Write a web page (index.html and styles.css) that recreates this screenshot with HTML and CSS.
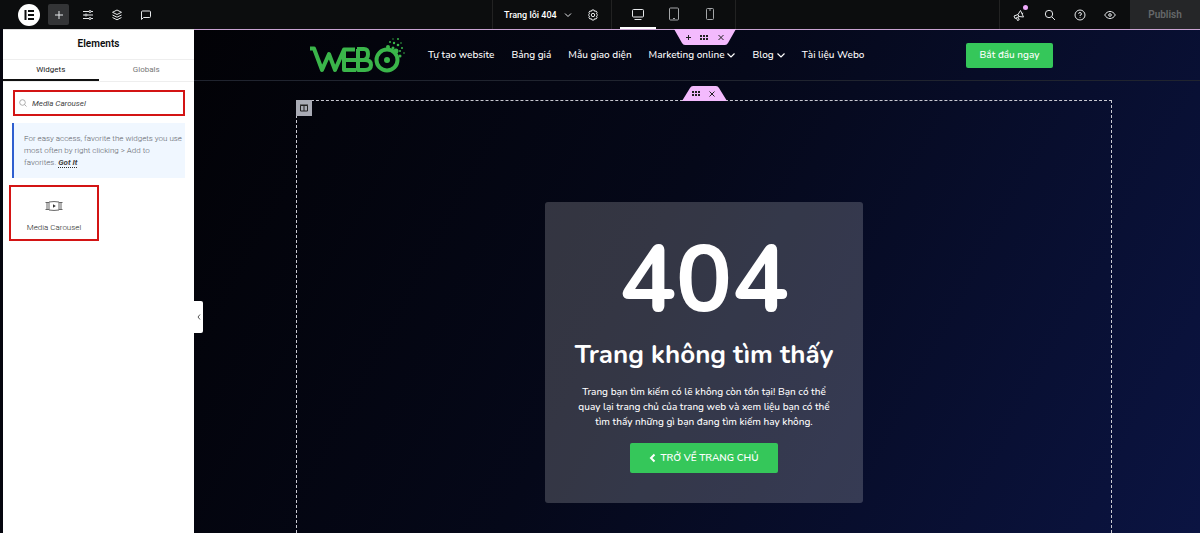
FILE: index.html
```html
<!DOCTYPE html>
<html lang="vi">
<head>
<meta charset="utf-8">
<meta name="viewport" content="width=device-width, initial-scale=1">
<title>Trang lỗi 404</title>
<link rel="stylesheet" href="styles.css">
</head>
<body>
<header class="topbar">
  <div class="tools">
    <button class="logo-btn" aria-label="Menu"><svg viewBox="0 0 22 22" width="22" height="22"><circle cx="11" cy="11" r="11" fill="#fff"/><path d="M6.500 6h2v10h-2zM10 6h6v2h-6zM10 10h6v2h-6zM10 14h6v2h-6z" fill="#0c0d0e"/></svg></button>
    <button class="tool tool-active" aria-label="Add"><svg class="ico" viewBox="0 0 12 12" width="12" height="12"><path d="M6 2v8M2 6h8"/></svg></button>
    <button class="tool" aria-label="Settings"><svg class="ico" viewBox="0 0 12 12" width="12" height="12"><path d="M1 2.500h6M9 2.500h2M1 6h2M5 6h6M1 9.500h6M9 9.500h2"/><circle cx="8" cy="2.500" r="1"/><circle cx="4" cy="6" r="1"/><circle cx="8" cy="9.500" r="1"/></svg></button>
    <button class="tool" aria-label="Structure"><svg class="ico" viewBox="0 0 12 12" width="12" height="12"><path d="M6 1L1.500 3.300 6 5.500l4.500-2.200zM1.500 6L6 8.200 10.500 6M1.500 8.500L6 10.800l4.500-2.300"/></svg></button>
    <button class="tool" aria-label="Notes"><svg class="ico" viewBox="0 0 12 12" width="12" height="12"><path d="M1.500 10.500V3a1 1 0 0 1 1-1h7a1 1 0 0 1 1 1v4.500a1 1 0 0 1-1 1h-6z"/></svg></button>
  </div>
  <div class="doc">
    <button class="doc-name">Trang lỗi 404 <svg class="ico" viewBox="0 0 8 8" width="8" height="8"><path d="M1 2.500l3 3 3-3"/></svg></button>
    <button class="doc-gear" aria-label="Page settings"><svg class="ico" viewBox="0 0 12 12" width="12" height="12"><path d="M4.900 1h2.200l.5 1.300 1.500-.3 1 1.700-.7 1.200 1.300 1.100-1.300 1.100.7 1.200-1 1.700-1.500-.3L7.100 11H4.900l-.5-1.300-1.500.3-1-1.700.7-1.200L1.300 6l1.300-1.100-.7-1.200 1-1.700 1.500.3z"/><circle cx="6" cy="6" r="1.700"/></svg></button>
  </div>
  <div class="devices">
    <button class="device device-active" aria-label="Desktop"><svg class="ico" viewBox="0 0 14 14" width="14" height="14"><rect x="1.500" y="2.500" width="11" height="7.500" rx="1"/><path d="M3.500 12.500h7"/></svg></button>
    <button class="device" aria-label="Tablet"><svg class="ico ico-dim" viewBox="0 0 14 14" width="14" height="14"><rect x="2.500" y="1" width="9" height="12" rx="1"/><path d="M6 11.500h2"/></svg></button>
    <button class="device" aria-label="Mobile"><svg class="ico ico-dim" viewBox="0 0 14 14" width="14" height="14"><rect x="3.500" y="1.500" width="7" height="11" rx="1"/><path d="M6 3h2"/></svg></button>
  </div>
  <div class="actions">
    <button class="action" aria-label="What's new"><svg class="ico" viewBox="0 0 14 14" width="14" height="14"><path d="M2 8l4-1.500L8.500 2.500l3 6.500-4.500-.5L3 10.500zM6 6.500l1 2M10 5.700l1.200-.7M4.500 10l1 2.500 1.700-.7-1-2.500"/></svg><span class="dot"></span></button>
    <button class="action" aria-label="Finder"><svg class="ico" viewBox="0 0 12 12" width="12" height="12"><circle cx="5" cy="5" r="3.700"/><path d="M7.800 7.800l3.200 3.200"/></svg></button>
    <button class="action" aria-label="Help"><svg class="ico" viewBox="0 0 12 12" width="12" height="12"><circle cx="6" cy="6" r="5"/><path d="M4.600 4.800a1.400 1.400 0 1 1 1.400 1.500v.7M6 8.300v.7"/></svg></button>
    <button class="action" aria-label="Preview"><svg class="ico" viewBox="0 0 12 12" width="12" height="12"><path d="M.7 6C3.300 1.300 8.700 1.300 11.300 6 8.700 10.700 3.300 10.700.7 6z"/><circle cx="6" cy="6" r="1.300"/></svg></button>
  </div>
  <button class="publish">Publish</button>
</header>
<div class="workspace">
  <aside class="panel">
    <h2 class="panel-title">Elements</h2>
    <div class="tabs"><button class="tab tab-active">Widgets</button><button class="tab">Globals</button></div>
    <div class="panel-body">
      <label class="search"><svg viewBox="0 0 8 8" width="8" height="8" fill="none" stroke="#999" stroke-width=".8"><circle cx="3.500" cy="3.500" r="2.800"/><path d="M5.500 5.500l2 2"/></svg><input type="text" value="Media Carousel" aria-label="Search Widget"></label>
      <p class="tip">For easy access, favorite the widgets you use most often by right clicking &gt; Add to<br>favorites. <a class="got-it" href="#">Got It</a></p>
      <button class="widget"><svg viewBox="0 0 18 12" width="18" height="12" fill="none" stroke="#666"><path d="M4 2q5-.9 10 0v8q-5 .9-10 0zM2 2.500v7M.5 2.500H4M.5 9.500H4M16 2.500v7M14 2.500h3.500M14 9.500h3.500"/><path d="M8 4.200v3.600L10.800 6z" fill="#333" stroke="none"/></svg><span>Media Carousel</span></button>
    </div>
    <button class="collapse" aria-label="Hide panel"><svg viewBox="0 0 4 6" width="4" height="6" fill="none" stroke="#555"><path d="M3 .5L1 3l2 2.500"/></svg></button>
  </aside>
  <main class="canvas">
    <header class="site-head">
      <div class="handle handle-down"><svg viewBox="0 0 62 16" width="62" height="16"><path d="M0 0h62l-8 14q-1 2-3 2H11q-2 0-3-2z" fill="#f3bafd"/><path d="M12 8.500h5M14.500 6v5M44.500 6l5 5M49.500 6l-5 5" stroke="#222" fill="none"/><path d="M26 7h8M26 10h8" stroke="#222" stroke-width="2" stroke-dasharray="2 1" fill="none"/></svg></div>
      <a class="brand" href="#" aria-label="WEBO"><svg viewBox="0 0 96 36" width="96" height="36" fill="none" stroke="#3ab54a" stroke-width="4" stroke-linejoin="round"><path d="M1 11.500h4l8 21.500 7-16 6 16 9-20.500h11M35 13v20h12M35 23h12M49 12v21h7q6 0 6-5t-6-5h-5M48 12h7q4 0 4 5t-4 6"/><circle cx="78" cy="23" r="10.500"/><circle cx="78" cy="23" r="3" fill="#3ab54a" stroke="none"/><g fill="#3ab54a" stroke="none"><circle cx="79" cy="10" r="2"/><circle cx="84" cy="11" r="1.500"/><circle cx="87" cy="14" r="2.500"/><circle cx="91" cy="19" r="1.500"/><circle cx="81" cy="5" r="1"/><circle cx="85" cy="6" r="1.200"/><circle cx="89" cy="2" r="1"/><circle cx="89" cy="8" r="1.300"/><circle cx="92" cy="6" r=".8"/><circle cx="93" cy="11" r="1"/><circle cx="91" cy="14" r="1"/><circle cx="95" cy="16" r=".8"/><circle cx="84" cy="2" r=".7"/></g></svg></a>
      <nav class="nav">
        <a href="#">Tự tạo website</a><a href="#">Bảng giá</a><a href="#">Mẫu giao diện</a>
        <a href="#">Marketing online <svg viewBox="0 0 8 8" width="8" height="8"><path d="M.5 2.500L4 6l3.500-3.500" fill="none" stroke="#fff" stroke-width="1.200"/></svg></a>
        <a href="#">Blog <svg viewBox="0 0 8 8" width="8" height="8"><path d="M.5 2.500L4 6l3.500-3.500" fill="none" stroke="#fff" stroke-width="1.200"/></svg></a>
        <a href="#">Tài liệu Webo</a>
      </nav>
      <a class="cta" href="#">Bắt đầu ngay</a>
    </header>
    <section class="hero">
      <div class="handle handle-up"><svg viewBox="0 0 45 15" width="45" height="15"><path d="M0 15L8 2q1-2 3-2h23q2 0 3 2l8 13z" fill="#f3bafd"/><path d="M10 6h8M10 9h8" stroke="#222" stroke-width="2" stroke-dasharray="2 1" fill="none"/><path d="M27.500 5.500l5 5M32.500 5.500l-5 5" stroke="#222" fill="none"/></svg></div>
      <div class="corner"><svg viewBox="0 0 8 8" width="8" height="8" fill="none" stroke="#222"><path d="M.5 1.500h7v5.500h-7zM4 1v6M0 1h8"/></svg></div>
      <div class="card">
        <h1 class="code">404</h1>
        <h2 class="headline">Trang không tìm thấy</h2>
        <p class="copy">Trang bạn tìm kiếm có lẽ không còn tồn tại! Bạn có thể quay lại trang chủ của trang web và xem liệu bạn có thể tìm thấy những gì bạn đang tìm kiếm hay không.</p>
        <a class="home" href="#"><svg viewBox="0 0 7 10" width="7" height="10"><path d="M5.500 1.500L2 5l3.500 3.500" fill="none" stroke="#fff" stroke-width="2"/></svg>TRỞ VỀ TRANG CHỦ</a>
      </div>
    </section>
  </main>
</div>
</body>
</html>
```

FILE: styles.css
```css
* { box-sizing: border-box; }
body { margin: 0; min-height: 100vh; display: flex; flex-direction: column; background: #05060f; font-family: Roboto, "Liberation Sans", sans-serif; overflow: hidden; }
button { border: 0; padding: 0; background: none; color: inherit; font: inherit; }
svg { display: block; flex: none; }
a { color: inherit; text-decoration: none; }
h1, h2, p { margin: 0; }
.ico { fill: none; stroke: #e6e8ea; stroke-width: 1; }
.ico-dim { stroke: #a4a6a8; }
.topbar { display: grid; grid-template-columns: 492fr 120px 124px 394fr 70px; height: 29px; background: #0c0d0e; color: #fff; }
.tools { display: flex; align-items: center; gap: 8px; padding-left: 18px; }
.tool { width: 21px; height: 21px; display: grid; place-items: center; border-radius: 2px; }
.tool-active { background: #333436; }
.doc { display: flex; align-items: center; justify-content: space-between; padding: 0 12px 0 11px; border-left: 1px solid #222; border-right: 1px solid #222; }
.doc-name { display: flex; align-items: center; gap: 7px; font-size: 9px; font-weight: 500; }
.devices { display: flex; padding-left: 8px; border-right: 1px solid #222; }
.device { width: 36px; display: grid; place-items: center; border-bottom: 2px solid transparent; }
.device-active { border-color: #fff; }
.actions { justify-self: end; display: flex; align-items: center; gap: 18px; padding: 0 14px 0 12px; border-left: 1px solid #222; }
.action { position: relative; }
.dot { position: absolute; top: -3px; right: -2px; width: 5px; height: 5px; border-radius: 50%; background: #f0abfc; }
.publish { background: #252628; color: #66686a; font-size: 10px; font-weight: 600; }
.workspace { flex: 1; display: flex; padding-left: 3px; }
.panel { position: relative; width: 191px; background: #fff; color: #0c0d0e; border-top: 1px solid #ddd; }
.panel-title { height: 30px; line-height: 28px; text-align: center; font-size: 10px; font-weight: 600; border-bottom: 1px solid #eee; }
.tabs { display: flex; height: 22px; border-bottom: 1px solid #eee; }
.tab { flex: 1; font-size: 8px; color: #777; border-bottom: 2px solid transparent; }
.tab-active { color: #222; border-color: #111; }
.panel-body { padding: 8px 9px 0 6px; }
.search { display: flex; align-items: center; gap: 5px; height: 26px; margin-left: 4px; padding: 0 4px; border: 2px solid #d31414; }
.search input { flex: 1; min-width: 0; border: 0; padding: 0; outline: 0; background: none; font: italic 8px Roboto, sans-serif; color: #444; }
.tip { margin: 7px 0 7px 3px; padding: 10px 0 9px 10px; border-left: 2px solid #2f5fd0; background: #f0f7ff; color: #5c6168; font-size: 8px; font-weight: 300; line-height: 12px; }
.got-it { color: #444; font-style: italic; font-weight: 700; border-bottom: 1px dotted #333; }
.widget { width: 90px; height: 56px; padding-top: 5px; display: flex; flex-direction: column; align-items: center; justify-content: center; gap: 11px; border: 2px solid #d31414; font-size: 8px; font-weight: 300; color: #222; }
.collapse { position: absolute; left: 100%; top: 271px; width: 9px; height: 32px; display: grid; place-items: center; background: #fff; border-radius: 0 2px 2px 0; }
.canvas { flex: 1; display: flex; flex-direction: column; background: linear-gradient(118deg, #020206 0%, #050819 45%, #0b1442 100%); color: #fff; border-top: 1px solid #c9a3d2; font-family: Nunito, Lato, "Noto Sans", sans-serif; }
.site-head { position: relative; display: flex; align-items: center; height: 51px; padding: 0 147px 0 115px; border-bottom: 1px solid #20242f; }
.nav { display: flex; gap: 17px; margin-left: 23px; font-size: 10px; font-weight: 500; white-space: nowrap; }
.nav a { display: flex; align-items: center; gap: 3px; }
.cta { margin-left: auto; width: 87px; line-height: 25px; text-align: center; background: #35c75a; border-radius: 2px; font-size: 10px; font-weight: 500; }
.handle { position: absolute; left: 50%; }
.handle-down { top: -1px; margin-left: -23px; }
.handle-up { bottom: 100%; margin-left: -22px; }
.hero { position: relative; flex: 1; margin: 19px 88px 0 102px; border: 1px dashed #c9c9d2; border-bottom: 0; display: flex; justify-content: center; align-items: flex-start; padding: 101px 0 30px; }
.corner { position: absolute; left: -1px; top: -1px; width: 16px; height: 16px; display: grid; place-items: center; background: #a9abb5; }
.card { width: 318px; padding: 24px 28px 30px; border-radius: 3px; background: #ffffff30; text-align: center; }
.code { font-size: 94px; line-height: 108px; font-weight: 700; }
.headline { margin-top: 1px; font-size: 26px; line-height: 40px; font-weight: 700; white-space: nowrap; }
.copy { margin: 10px 0 13px; font-size: 10px; line-height: 15px; font-weight: 500; }
.home { display: inline-flex; align-items: center; justify-content: center; gap: 4px; width: 148px; height: 30px; background: #35c75a; border-radius: 2px; font-size: 10px; font-weight: 600; }
```
